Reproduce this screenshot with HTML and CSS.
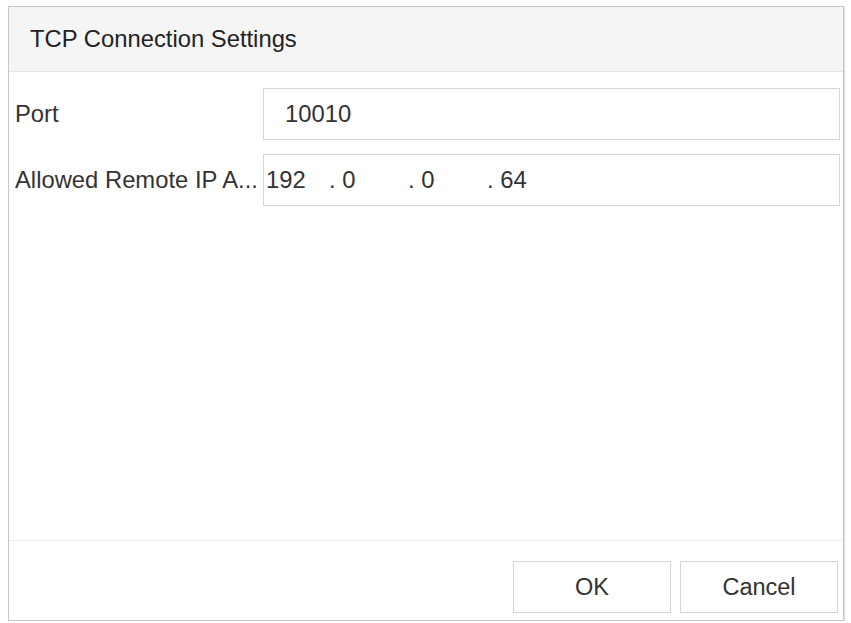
FILE: index.html
```html
<!DOCTYPE html>
<html>
<head>
<meta charset="utf-8">
<link rel="stylesheet" href="styles.css">
</head>
<body>
<div class="dialog">
  <div class="header">TCP Connection Settings</div>
  <div class="body">
    <div class="row">
      <div class="label">Port</div>
      <div class="field port">10010</div>
    </div>
    <div class="row">
      <div class="label">Allowed Remote IP A...</div>
      <div class="field ip">
        <span class="oct o1">192</span>
        <span class="oct o2">. 0</span>
        <span class="oct o3">. 0</span>
        <span class="oct o4">. 64</span>
      </div>
    </div>
  </div>
  <div class="footer">
    <button class="btn">OK</button>
    <button class="btn">Cancel</button>
  </div>
</div>
</body>
</html>
```

FILE: styles.css
```css
html, body {
  margin: 0;
  padding: 0;
  background: #fff;
}
body {
  font-family: "Liberation Sans", Arial, sans-serif;
  color: #333;
}
.dialog {
  box-sizing: border-box;
  margin: 6px 0 0 8px;
  width: 836px;
  height: 615px;
  border: 1px solid #c8c8c8;
  box-shadow: 1px 1px 1px #e0e0e0;
  display: flex;
  flex-direction: column;
  background: #fff;
}
.header {
  box-sizing: border-box;
  height: 65px;
  background: #f5f5f5;
  border-bottom: 1px solid #e4e4e4;
  font-size: 23.8px;
  padding-left: 21px;
  line-height: 64px;
  color: #222;
}
.body {
  flex: 1;
  padding: 16px 3px 0 6px;
  display: flex;
  flex-direction: column;
  gap: 14px;
}
.row {
  display: flex;
  align-items: center;
  height: 52px;
}
.label {
  width: 248px;
  font-size: 23.8px;
  white-space: nowrap;
  color: #333;
}
.field {
  box-sizing: border-box;
  flex: 1;
  height: 52px;
  border: 1px solid #d6d6d6;
  display: flex;
  align-items: center;
  font-size: 23.8px;
  color: #333;
}
.port {
  padding-left: 21px;
}
.ip {
  padding-left: 2px;
}
.oct {
  display: inline-block;
  white-space: pre;
}
.o1 { width: 63px; }
.o2 { width: 79px; }
.o3 { width: 79px; }
.footer {
  box-sizing: border-box;
  height: 80px;
  border-top: 1px solid #ececec;
  display: flex;
  justify-content: flex-end;
  gap: 9px;
  padding: 20px 5px 0 0;
}
.btn {
  box-sizing: border-box;
  width: 158px;
  height: 52px;
  background: #fff;
  border: 1px solid #d6d6d6;
  font-family: "Liberation Sans", Arial, sans-serif;
  font-size: 23.5px;
  color: #333;
  padding: 0;
}
```
